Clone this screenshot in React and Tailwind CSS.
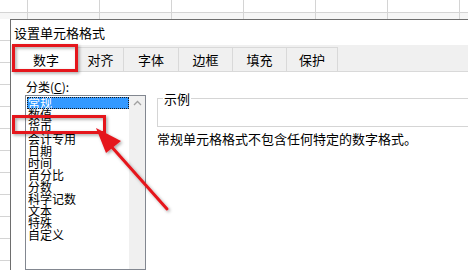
import React from 'react';

const tabs = [
  { label: '数字', w: 'w-[64px]', active: true },
  { label: '对齐', w: 'w-[46px]' },
  { label: '字体', w: 'w-[55px]' },
  { label: '边框', w: 'w-[54px]' },
  { label: '填充', w: 'w-[54px]' },
  { label: '保护', w: 'w-[51px]' },
];

const categories = ['常规', '数值', '货币', '会计专用', '日期', '时间', '百分比', '分数', '科学记数', '文本', '特殊', '自定义'];

const Annotations = () => (
  <svg className="absolute left-0 top-0 pointer-events-none" width="468" height="270" viewBox="0 0 468 270">
    <defs>
      <filter id="shadow" x="-20%" y="-20%" width="140%" height="140%">
        <feDropShadow dx="1.5" dy="1.5" stdDeviation="1.5" floodColor="#000" floodOpacity="0.35" />
      </filter>
    </defs>
    <g filter="url(#shadow)" stroke="#e5161c" fill="none" strokeWidth="3">
      <rect x="13.5" y="45.5" width="63" height="25" />
      <rect x="13.5" y="116.5" width="91" height="16" />
      <line x1="167" y1="209" x2="110" y2="145" strokeLinecap="round" />
      <polygon points="96,128 121,141 106,153" fill="#e5161c" stroke="none" />
    </g>
  </svg>
);

export default function App() {
  return (
    <div
      className="relative w-[468px] h-[270px] overflow-hidden bg-white text-black"
      style={{ fontFamily: '"Noto Sans CJK SC", "Noto Sans", sans-serif' }}
    >
      {/* spreadsheet behind */}
      <div className="h-[19px] flex flex-col">
        <div className="h-[13px] flex border-b border-[#d4d4d4]">
          <div className="w-[28px] border-r border-[#d4d4d4]" />
          {[0, 1, 2, 3, 4, 5].map((i) => (
            <div key={i} className="w-[72px] shrink-0 border-r border-[#d4d4d4]" />
          ))}
        </div>
        <div className="flex-1 flex bg-[#f6f6f6]">
          <div className="w-[28px] border-r border-[#d4d4d4]" />
          {[0, 1, 2, 3, 4, 5].map((i) => (
            <div key={i} className="w-[72px] shrink-0 border-r border-[#d4d4d4]" />
          ))}
        </div>
      </div>
      <div className="flex h-[251px]">
        <div className="w-[10px] flex flex-col bg-white">
          {Array.from({ length: 12 }).map((_, i) => (
            <div key={i} className="h-[22px] shrink-0 border-b border-[#d4d4d4]" />
          ))}
        </div>
        {/* dialog */}
        <div className="flex-1 border-l border-t border-[#6e6e6e] bg-white flex flex-col">
          <div className="h-[25px] flex items-center pl-[3px] text-[13px] leading-none">设置单元格格式</div>
          <div className="h-[27px] bg-[#f0f0f0] flex items-end pl-[3px] border-b border-[#d9d9d9]">
            {tabs.map((t) =>
              t.active ? (
                <div
                  key={t.label}
                  className={`${t.w} h-[27px] bg-white flex items-center justify-center text-[13px] leading-none border-x border-t border-[#d9d9d9] -mb-px`}
                >
                  {t.label}
                </div>
              ) : (
                <div
                  key={t.label}
                  className={`${t.w} h-[24px] flex items-center justify-center text-[13px] leading-none border-r border-t border-[#d9d9d9] bg-[#f0f0f0]`}
                >
                  {t.label}
                </div>
              )
            )}
          </div>
          <div className="flex-1 flex pl-[14px] pt-[9px]">
            <div className="w-[121px] flex flex-col">
              <div className="text-[12px] leading-none pl-[1px] h-[12px]">分类(<span className="underline">C</span>):</div>
              <div className="mt-[2px] flex-1 border border-[#828790] flex">
                <div className="flex-1 pt-[1px] pl-[1px] flex flex-col text-[12px] leading-[12px]">
                  {categories.map((c, i) => (
                    <div
                      key={c}
                      className={
                        i === 0
                          ? 'h-[12px] bg-[#3399ff] text-white outline-1 outline-dotted outline-[#1a1a1a] -outline-offset-1 pl-[1px] whitespace-nowrap'
                          : 'h-[12px] pl-[1px] whitespace-nowrap'
                      }
                    >
                      {c}
                    </div>
                  ))}
                </div>
                <div className="w-[16px] bg-[#f0f0f0] flex justify-center pt-[4px]">
                  <svg width="9" height="6" viewBox="0 0 9 6">
                    <path d="M1 5 L4.5 1.5 L8 5" stroke="#a0a0a0" strokeWidth="1.3" fill="none" />
                  </svg>
                </div>
              </div>
            </div>
            <div className="flex-1 pl-[11px] pt-[17px] flex flex-col">
              <div className="relative h-[29px] border border-r-0 border-[#d5d5d5]">
                <span className="absolute left-[5px] -top-[7px] bg-white px-[1px] text-[13px] leading-none">示例</span>
              </div>
              <div className="mt-[5px] text-[13px] leading-none whitespace-nowrap">常规单元格格式不包含任何特定的数字格式。</div>
            </div>
          </div>
        </div>
      </div>
      <Annotations />
    </div>
  );
}
